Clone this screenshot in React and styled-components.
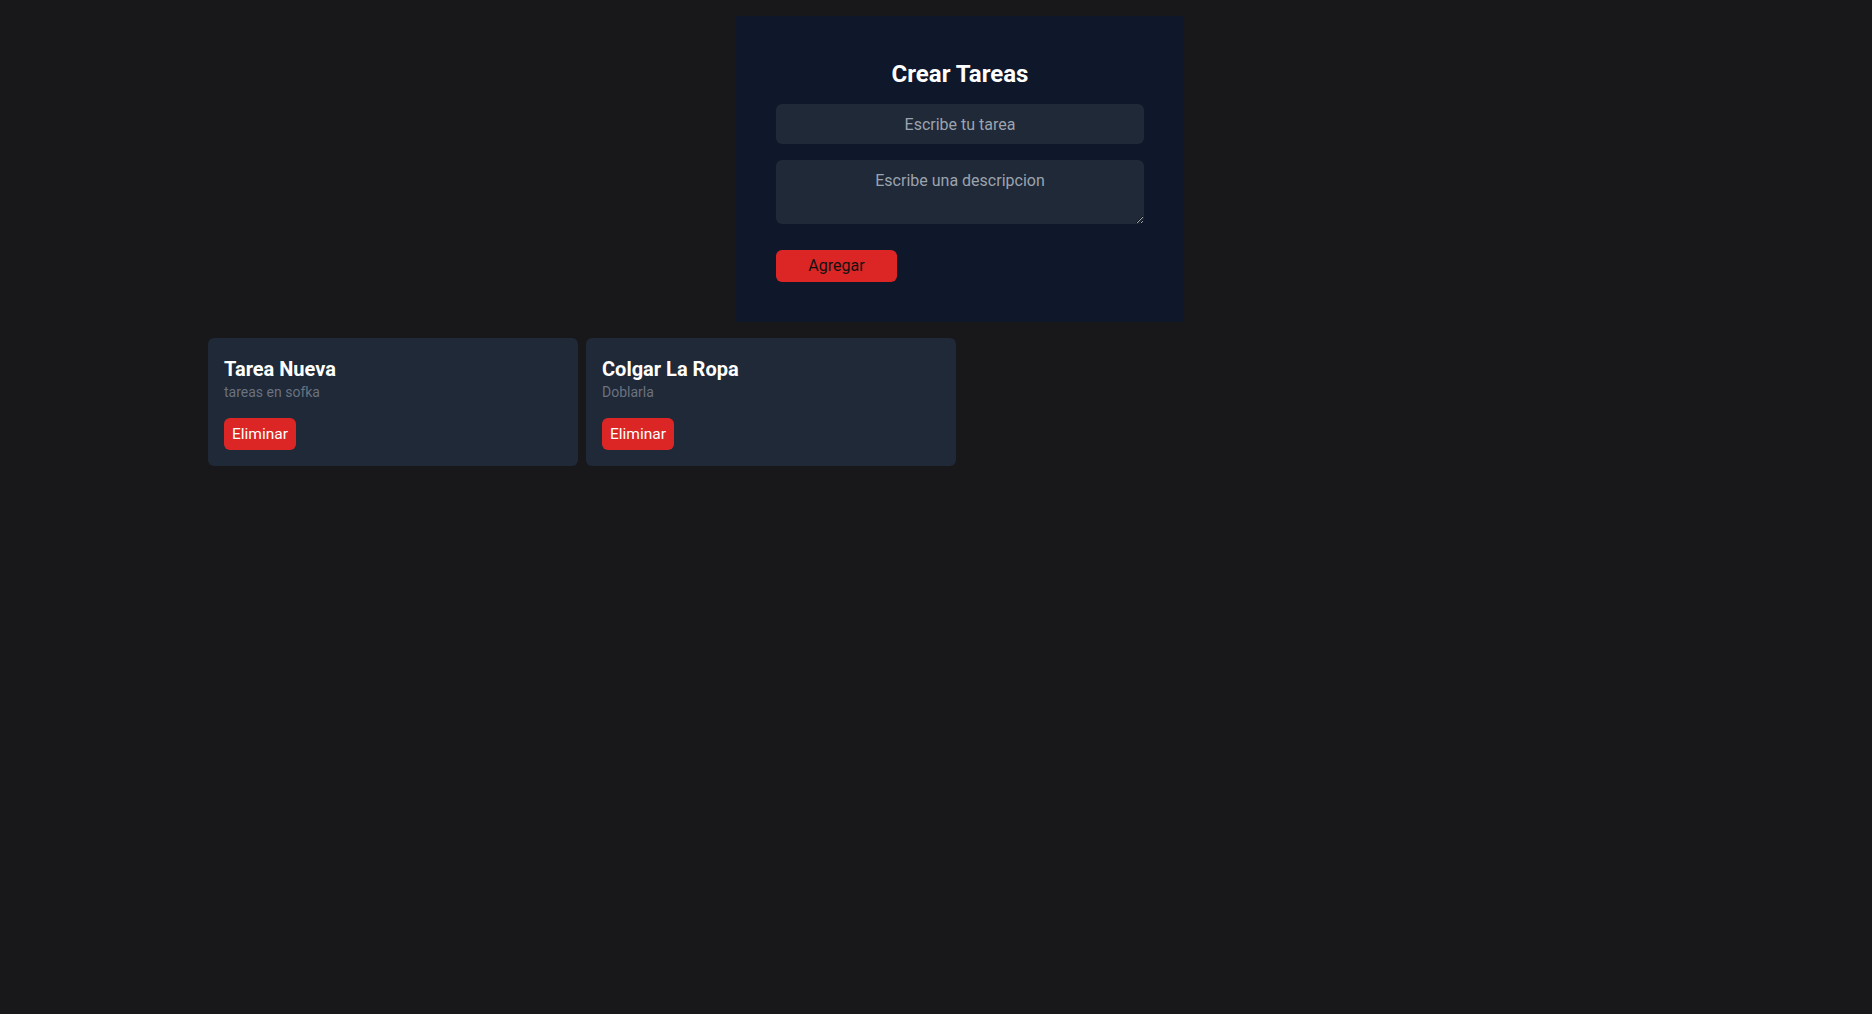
import React from "react";
import styled, { createGlobalStyle } from "styled-components";

const Global = createGlobalStyle`
  html, body { margin: 0; padding: 0; background: #18181b; }
  body { font-family: Roboto, "Noto Sans", "Liberation Sans", sans-serif; color: #fff; }
  * { box-sizing: border-box; }
`;

const Main = styled.main`
  width: 1536px;
  margin-left: 192px;
  padding: 16px 16px;
  display: flex;
  flex-direction: column;
  gap: 16px;
`;

const Panel = styled.form`
  width: 448px;
  align-self: center;
  background: #0f172a;
  padding: 40px;
  display: flex;
  flex-direction: column;
`;

const Title = styled.h1`
  margin: 0 0 14px;
  padding-top: 2px;
  font-size: 24px;
  line-height: 32px;
  font-weight: 700;
  text-align: center;
  color: #fff;
`;

const fieldBase = `
  width: 100%;
  background: #1f2937;
  border: none;
  border-radius: 6px;
  color: #fff;
  font-family: inherit;
  font-size: 16px;
  line-height: 24px;
  text-align: center;
  outline: none;
  &::placeholder { color: #9ca3af; }
`;

const Input = styled.input`
  ${fieldBase}
  height: 40px;
  padding: 8px 12px;
  margin-bottom: 16px;
`;

const TextArea = styled.textarea`
  ${fieldBase}
  display: block;
  height: 64px;
  padding: 9px 12px 7px;
  resize: vertical;
  margin-bottom: 26px;
`;

const Button = styled.button`
  border: none;
  background: #dc2626;
  border-radius: 6px;
  font-family: inherit;
  font-size: ${(p) => (p.$light ? "15.5px" : "16px")};
  line-height: 24px;
  cursor: pointer;
  color: ${(p) => (p.$light ? "#fff" : "#111")};
  padding: ${(p) => (p.$light ? "4px 8px" : "4px 32px")};
  width: ${(p) => (p.$width ? p.$width + "px" : "auto")};
  align-self: flex-start;
`;

const Grid = styled.section`
  display: grid;
  grid-template-columns: repeat(4, 1fr);
  gap: 8px;
`;

const Card = styled.article`
  background: #1f2937;
  border-radius: 6px;
  padding: 16px;
  display: flex;
  flex-direction: column;
`;

const CardTitle = styled.h2`
  margin: 0;
  padding-top: 1px;
  margin-bottom: -1px;
  font-size: 20px;
  line-height: 28px;
  font-weight: 700;
  color: #fff;
`;

const CardDesc = styled.p`
  margin: 0 0 16px;
  font-size: 14px;
  line-height: 20px;
  color: #6b7280;
`;

const tasks = [
  { title: "Tarea Nueva", desc: "tareas en sofka" },
  { title: "Colgar La Ropa", desc: "Doblarla" },
];

export default function App() {
  return (
    <>
      <Global />
      <Main>
        <Panel onSubmit={(e) => e.preventDefault()}>
          <Title>Crear Tareas</Title>
          <Input placeholder="Escribe tu tarea" />
          <TextArea placeholder="Escribe una descripcion" />
          <Button type="submit" $width={121}>Agregar</Button>
        </Panel>
        <Grid>
          {tasks.map((t) => (
            <Card key={t.title}>
              <CardTitle>{t.title}</CardTitle>
              <CardDesc>{t.desc}</CardDesc>
              <Button $light type="button">Eliminar</Button>
            </Card>
          ))}
        </Grid>
      </Main>
    </>
  );
}
